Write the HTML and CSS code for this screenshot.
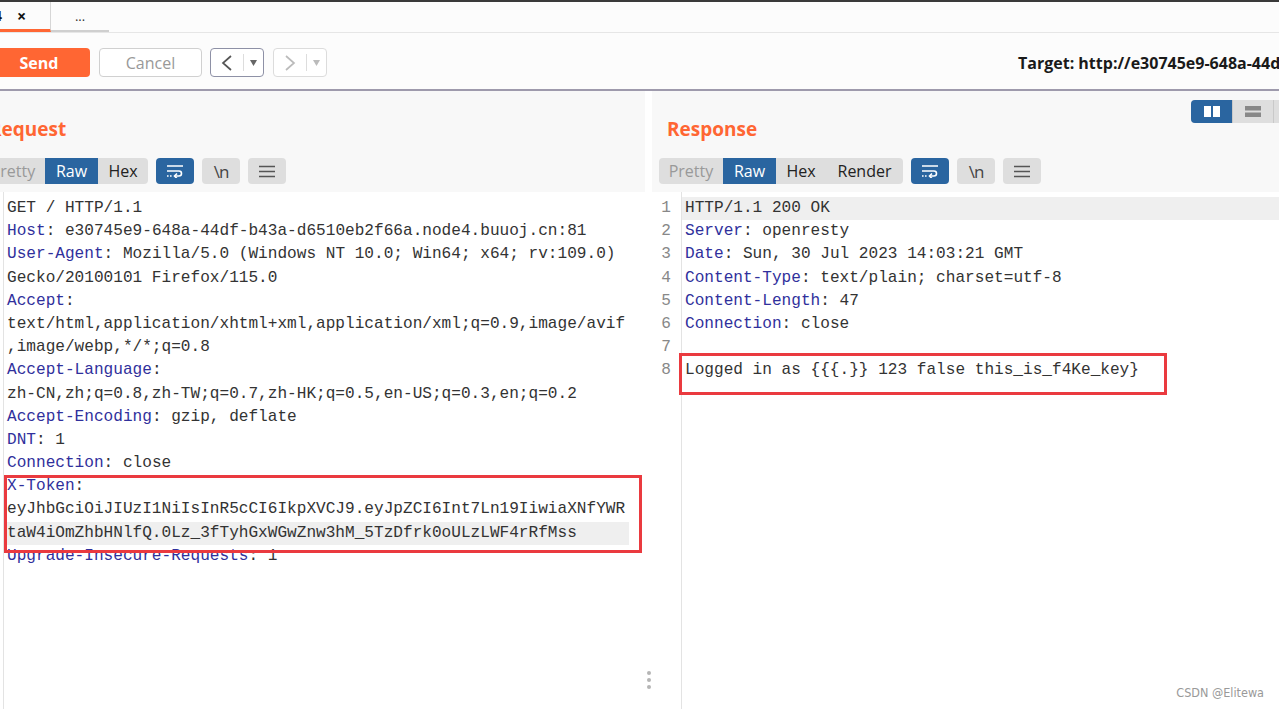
FILE: index.html
```html
<!DOCTYPE html>
<html lang="en">
<head>
<meta charset="UTF-8">
<meta name="viewport" content="width=device-width, initial-scale=1.0">
<title>Repeater</title>
<link rel="stylesheet" href="styles.css">
</head>
<body>
<div class="topline"></div>
<div class="tabs">
    <div class="tab tab-active"><span>4</span><span class="tab-close">×</span></div>
    <div class="tab tab-more">...</div>
</div>
<div class="toolbar">
    <button class="btn btn-send">Send</button>
    <button class="btn btn-cancel">Cancel</button>
    <div class="nav nav-back">
        <span class="nav-arrow"><svg width="12" height="18" viewBox="0 0 12 18"><path d="M10 2 2 9l8 7" fill="none" stroke="#555" stroke-width="1.7"/></svg></span>
        <span class="nav-sep"></span>
        <span class="nav-drop"><svg width="7" height="6" viewBox="0 0 7 6"><path d="M0 0h7L3.5 6z" fill="#666"/></svg></span>
    </div>
    <div class="nav nav-fwd">
        <span class="nav-arrow"><svg width="12" height="18" viewBox="0 0 12 18"><path d="M2 2l8 7-8 7" fill="none" stroke="#bbb" stroke-width="1.7"/></svg></span>
        <span class="nav-sep"></span>
        <span class="nav-drop"><svg width="7" height="6" viewBox="0 0 7 6"><path d="M0 0h7L3.5 6z" fill="#bbb"/></svg></span>
    </div>
    <div class="target">Target: http://e30745e9-648a-44df-b43a-d6510eb2f66a.node4.buuoj.cn:81</div>
</div>
<div class="rule"></div>

<div class="panes">
    <div class="pane pane-req">
        <div class="pane-head">
            <div class="head-row">
                <h2>Request</h2>
            </div>
            <div class="bar">
                <div class="seg">
                    <span class="seg-item seg-dim w-pretty">Pretty</span>
                    <span class="seg-item seg-on w-raw">Raw</span>
                    <span class="seg-item w-hex">Hex</span>
                </div>
                <span class="ibtn ibtn-on"><svg width="18" height="14" viewBox="0 0 18 14"><path d="M1 2h16M1 7h12a2.5 2.5 0 0 1 0 5H9" fill="none" stroke="#fff" stroke-width="1.6"/><path d="M11 9.5 8.5 12l2.5 2.5" fill="none" stroke="#fff" stroke-width="1.6"/><path d="M1 12h1.6M4 12h1.6" stroke="#fff" stroke-width="1.6"/></svg></span>
                <span class="ibtn ibtn-text">\n</span>
                <span class="ibtn"><svg width="16" height="13" viewBox="0 0 16 13"><path d="M0 1.5h16M0 6.5h16M0 11.5h16" stroke="#555" stroke-width="1.6"/></svg></span>
            </div>
        </div>
        <div class="code">
            <div class="gutter"></div>
            <div class="lines">
                <div class="ln">GET / HTTP/1.1</div>
                <div class="ln"><span class="k">Host</span>: e30745e9-648a-44df-b43a-d6510eb2f66a.node4.buuoj.cn:81</div>
                <div class="ln"><span class="k">User-Agent</span>: Mozilla/5.0 (Windows NT 10.0; Win64; x64; rv:109.0)</div>
                <div class="ln">Gecko/20100101 Firefox/115.0</div>
                <div class="ln"><span class="k">Accept</span>:</div>
                <div class="ln">text/html,application/xhtml+xml,application/xml;q=0.9,image/avif</div>
                <div class="ln">,image/webp,*/*;q=0.8</div>
                <div class="ln"><span class="k">Accept-Language</span>:</div>
                <div class="ln">zh-CN,zh;q=0.8,zh-TW;q=0.7,zh-HK;q=0.5,en-US;q=0.3,en;q=0.2</div>
                <div class="ln"><span class="k">Accept-Encoding</span>: gzip, deflate</div>
                <div class="ln"><span class="k">DNT</span>: 1</div>
                <div class="ln"><span class="k">Connection</span>: close</div>
                <div class="mark mark-req">
                    <div class="ln"><span class="k">X-Token</span>:</div>
                    <div class="ln">eyJhbGciOiJIUzI1NiIsInR5cCI6IkpXVCJ9.eyJpZCI6Int7Ln19IiwiaXNfYWR</div>
                    <div class="ln hl">taW4iOmZhbHNlfQ.0Lz_3fTyhGxWGwZnw3hM_5TzDfrk0oULzLWF4rRfMss</div>
                </div>
                <div class="ln"><span class="k">Upgrade-Insecure-Requests</span>: 1</div>
            </div>
        </div>
    </div>

    <div class="splitter"><i></i><i></i><i></i></div>

    <div class="pane pane-res">
        <div class="pane-head">
            <div class="head-row">
                <h2>Response</h2>
                <div class="toggle">
                    <span class="tg-item tg-on"><svg width="18" height="11" viewBox="0 0 18 11"><rect x="1" y="0" width="7" height="11" fill="#fff"/><rect x="10" y="0" width="7" height="11" fill="#fff"/></svg></span>
                    <span class="tg-item"><svg width="16" height="11" viewBox="0 0 16 11"><rect x="0" y="0" width="16" height="4.5" fill="#888"/><rect x="0" y="6.5" width="16" height="4.5" fill="#888"/></svg></span>
                    <span class="tg-item"></span>
                </div>
            </div>
            <div class="bar">
                <div class="seg">
                    <span class="seg-item seg-dim w-pretty">Pretty</span>
                    <span class="seg-item seg-on w-raw">Raw</span>
                    <span class="seg-item w-hex">Hex</span>
                    <span class="seg-item w-render">Render</span>
                </div>
                <span class="ibtn ibtn-on"><svg width="18" height="14" viewBox="0 0 18 14"><path d="M1 2h16M1 7h12a2.5 2.5 0 0 1 0 5H9" fill="none" stroke="#fff" stroke-width="1.6"/><path d="M11 9.5 8.5 12l2.5 2.5" fill="none" stroke="#fff" stroke-width="1.6"/><path d="M1 12h1.6M4 12h1.6" stroke="#fff" stroke-width="1.6"/></svg></span>
                <span class="ibtn ibtn-text">\n</span>
                <span class="ibtn"><svg width="16" height="13" viewBox="0 0 16 13"><path d="M0 1.5h16M0 6.5h16M0 11.5h16" stroke="#555" stroke-width="1.6"/></svg></span>
            </div>
        </div>
        <div class="code">
            <div class="gutter">
                <div>1</div><div>2</div><div>3</div><div>4</div><div>5</div><div>6</div><div>7</div><div>8</div>
            </div>
            <div class="lines">
                <div class="ln hl">HTTP/1.1 200 OK</div>
                <div class="ln"><span class="k">Server</span>: openresty</div>
                <div class="ln"><span class="k">Date</span>: Sun, 30 Jul 2023 14:03:21 GMT</div>
                <div class="ln"><span class="k">Content-Type</span>: text/plain; charset=utf-8</div>
                <div class="ln"><span class="k">Content-Length</span>: 47</div>
                <div class="ln"><span class="k">Connection</span>: close</div>
                <div class="ln"> </div>
                <div class="mark mark-res">
                    <div class="ln">Logged in as {{{.}} 123 false this_is_f4Ke_key}</div>
                </div>
            </div>
        </div>
    </div>
</div>

<div class="watermark">CSDN @Elitewa</div>
</body>
</html>
```

FILE: styles.css
```css
* {
    box-sizing: border-box;
}

body {
    margin: 0;
    width: 1279px;
    height: 709px;
    overflow: hidden;
    position: relative;
    background-color: #fff;
    font-family: "Open Sans", "Noto Sans", sans-serif;
    color: #222;
}

.topline {
    height: 2px;
    background-color: #3a3a3a;
}

.tabs {
    display: flex;
    height: 31px;
    background-color: #fcfcfc;
    border-bottom: 1px solid #e6e6e6;
}

.tab {
    height: 30px;
    display: flex;
    align-items: center;
    font-size: 14px;
}

.tab-active {
    margin-left: -10px;
    width: 61px;
    padding-left: 4px;
    font-weight: 700;
    color: #111;
    border-right: 1px solid #d6d6d6;
    border-bottom: 3px solid #ff6633;
}

.tab-close {
    margin-left: 15px;
    font-size: 16px;
}

.tab-more {
    width: 58px;
    justify-content: center;
    color: #333;
    font-size: 13px;
    border-bottom: 2px solid #cfcfcf;
}

.toolbar {
    display: flex;
    align-items: center;
    height: 56px;
    padding-top: 3px;
    background-color: #fcfcfc;
    white-space: nowrap;
}

.btn {
    height: 29px;
    border-radius: 4px;
    font-family: "Open Sans", sans-serif;
    font-size: 16px;
    flex: none;
    padding: 0;
}

.btn-send {
    margin-left: -12px;
    width: 102px;
    background-color: #ff6633;
    border: none;
    color: #fff;
    font-weight: 700;
}

.btn-cancel {
    margin-left: 9px;
    width: 103px;
    background-color: #fff;
    border: 1px solid #d0d0d0;
    color: #999;
}

.nav {
    display: flex;
    align-items: center;
    width: 54px;
    height: 29px;
    margin-left: 8px;
    background-color: #fff;
    border: 1.5px solid #8e91a6;
    border-radius: 4px;
    flex: none;
}

.nav-fwd {
    margin-left: 9px;
    border-color: #dcdcdc;
}

.nav-arrow {
    width: 32px;
    display: flex;
    justify-content: center;
}

.nav-sep {
    width: 1px;
    height: 17px;
    background-color: #ddd;
}

.nav-drop {
    flex: 1;
    display: flex;
    justify-content: center;
}

.target {
    margin-left: 691px;
    font-size: 16px;
    font-weight: 700;
    color: #1a1a1a;
    flex: none;
}

.rule {
    height: 2px;
    background-color: #9e9aac;
}

.panes {
    display: flex;
    margin-left: -26px;
    height: 618px;
}

.pane {
    display: flex;
    flex-direction: column;
    flex: none;
}

.pane-req {
    width: 671px;
}

.pane-res {
    width: 670px;
}

.pane-head {
    height: 101px;
    padding-top: 9px;
    background-color: #f8f8f8;
}

.head-row {
    display: flex;
    align-items: flex-start;
    height: 58px;
}

h2 {
    margin: 17px 0 0 15px;
    font-size: 19px;
    line-height: 24px;
    font-weight: 700;
    color: #ff6633;
}

.toggle {
    display: flex;
    margin-left: auto;
    margin-right: 8px;
    height: 23px;
    border-radius: 4px;
    overflow: hidden;
    background-color: #dedede;
}

.tg-item {
    width: 41px;
    display: flex;
    align-items: center;
    justify-content: center;
}

.tg-item + .tg-item {
    border-left: 1px solid #c9c9c9;
}

.tg-on {
    background-color: #2a65a0;
}

.bar {
    display: flex;
    gap: 8px;
    height: 26px;
    margin-left: 7px;
}

.seg {
    display: flex;
    background-color: #dedede;
    border-radius: 4px;
    overflow: hidden;
}

.seg-item {
    line-height: 26px;
    font-size: 16px;
    text-align: center;
    color: #222;
}

.seg-dim {
    color: #999;
}

.seg-on {
    background-color: #2a65a0;
    color: #fff;
}

.w-pretty { width: 64px; }
.w-raw { width: 53px; }
.w-hex { width: 50px; }
.w-render { width: 77px; }

.ibtn {
    width: 38px;
    height: 26px;
    border-radius: 4px;
    background-color: #dedede;
    display: flex;
    align-items: center;
    justify-content: center;
}

.ibtn-on {
    background-color: #2a65a0;
}

.ibtn-text {
    font-size: 17px;
    color: #444;
    letter-spacing: -1px;
}

.code {
    display: flex;
    flex: 1;
    background-color: #fff;
    font-family: "Liberation Mono", "DejaVu Sans Mono", monospace;
    font-size: 16.1px;
}

.gutter {
    width: 30px;
    flex: none;
    padding-top: 5px;
    padding-right: 10px;
    text-align: right;
    color: #888;
    line-height: 23.2px;
    border-right: 1px solid #e3e3e3;
}

.lines {
    flex: 1;
    padding-top: 5px;
}

.pane-req .lines {
    padding-right: 16px;
}

.ln {
    height: 23.2px;
    line-height: 23.2px;
    padding-left: 3px;
    white-space: pre;
    color: #333;
}

.k {
    color: #30309c;
}

.hl {
    background-color: #efefef;
}

.mark {
    position: relative;
}

.mark::after {
    content: "";
    position: absolute;
    border: 3px solid #ea3a3f;
    pointer-events: none;
}

.mark-req::after {
    top: 0;
    left: 0;
    right: -13px;
    bottom: -8px;
}

.mark-res::after {
    top: -6px;
    left: -3px;
    right: 155px;
    bottom: -12px;
}

.splitter {
    width: 7px;
    flex: none;
    display: flex;
    flex-direction: column;
    align-items: center;
    justify-content: flex-end;
    gap: 3px;
    padding-bottom: 20px;
    background-color: #fff;
}

.splitter i {
    width: 4px;
    height: 4px;
    border-radius: 50%;
    background-color: #b5b5b5;
}

.watermark {
    position: absolute;
    right: 15px;
    bottom: 9px;
    font-family: "DejaVu Sans Condensed", "Liberation Sans", sans-serif;
    font-size: 12.5px;
    color: #999;
}
```
